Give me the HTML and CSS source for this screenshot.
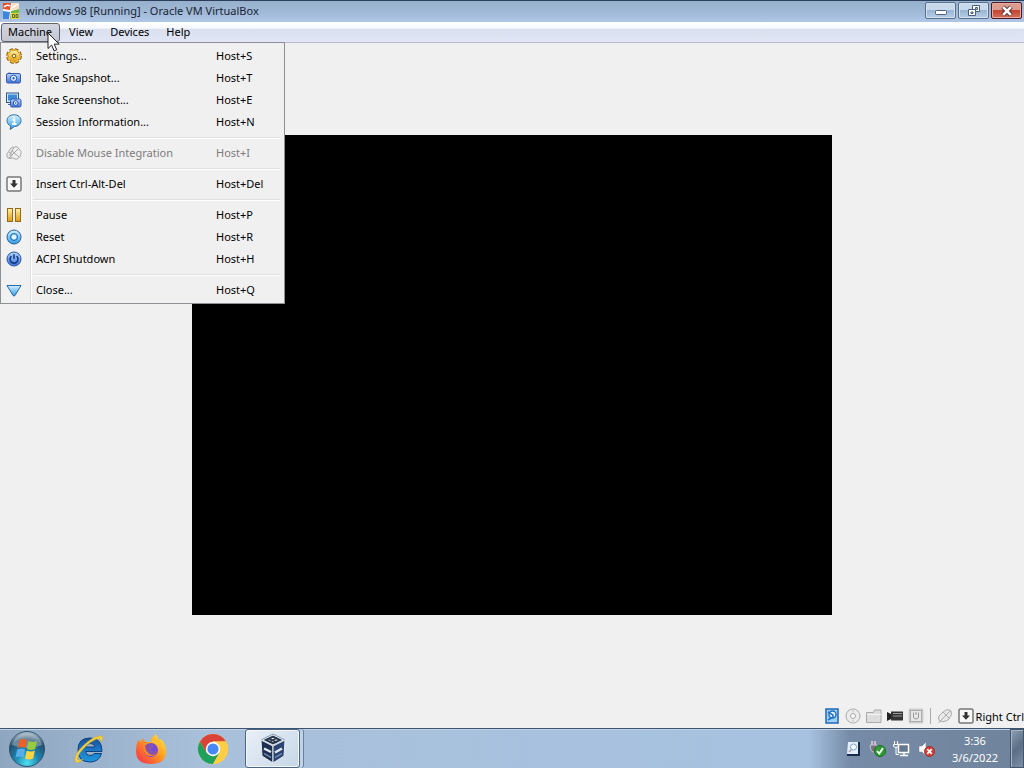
FILE: index.html
```
<!DOCTYPE html>
<html lang="en">
<head>
    <meta charset="UTF-8">
    <meta name="viewport" content="width=device-width, initial-scale=1.0">
    <title>windows 98 [Running] - Oracle VM VirtualBox</title>
    <link rel="stylesheet" href="styles.css">
</head>
<body>
    <!-- Shared gradients for the icons -->
    <svg class="defs" width="0" height="0" aria-hidden="true">
        <defs>
            <linearGradient id="gold" x1="0" y1="0" x2="0" y2="1">
                <stop offset="0" stop-color="#fff3a8"/><stop offset="1" stop-color="#e09a10"/>
            </linearGradient>
            <linearGradient id="blue" x1="0" y1="0" x2="0" y2="1">
                <stop offset="0" stop-color="#b5d8ff"/><stop offset="1" stop-color="#3d72dc"/>
            </linearGradient>
            <linearGradient id="sky" x1="0" y1="0" x2="0" y2="1">
                <stop offset="0" stop-color="#d4f1ff"/><stop offset="1" stop-color="#2f9be4"/>
            </linearGradient>
            <radialGradient id="orb" cx="0.5" cy="0.9" r="0.9">
                <stop offset="0" stop-color="#4fe0f0"/><stop offset="0.4" stop-color="#1c82ae"/>
                <stop offset="0.75" stop-color="#26506f"/><stop offset="1" stop-color="#b9cad6"/>
            </radialGradient>
            <linearGradient id="fire" x1="1" y1="0" x2="0" y2="1">
                <stop offset="0" stop-color="#fff04a"/><stop offset="0.45" stop-color="#ff9a1e"/><stop offset="1" stop-color="#f2264f"/>
            </linearGradient>
            <linearGradient id="ie" x1="0" y1="0" x2="0" y2="1">
                <stop offset="0" stop-color="#184f9a"/><stop offset="0.5" stop-color="#1d78c6"/><stop offset="1" stop-color="#1c9ade"/>
            </linearGradient>
        </defs>
    </svg>

    <header class="titlebar">
        <svg class="app-icon" width="18" height="18" viewBox="0 0 18 18">
            <rect x="1" y="1" width="16" height="16" fill="#fff"/>
            <path d="M1 1h8L8 8 1 7z" fill="#e8502c"/>
            <path d="M10 1h7v6l-7 1z" fill="#f9dcc0"/>
            <path d="M1 9l7 1-1 7H1z" fill="#3f86e0"/>
            <path d="M9 9l8-2v10H8z" fill="#77b83a"/>
            <path d="M2 5q3-3 6-1M10 6l6-4" fill="none" stroke="#fff" stroke-width="1.5"/>
            <path d="M9 17v-6h8v6z" fill="#e4d443"/>
            <path d="M10.500 12.500h2v3h-2zM14 12.500h2v3h-2z" fill="none" stroke="#556b28"/>
        </svg>
        <h1>windows 98 [Running] - Oracle VM VirtualBox</h1>
        <div class="window-buttons">
            <button type="button" aria-label="Minimize">
                <svg width="14" height="12" viewBox="0 0 14 12"><rect x="1.5" y="5.5" width="11" height="4" rx="1" fill="#fff" stroke="#4c5f78"/></svg>
            </button>
            <button type="button" aria-label="Restore">
                <svg width="14" height="12" viewBox="0 0 14 12"><path d="M5.5 .5h7v6h-7z" fill="#fff" stroke="#4c5f78"/><path d="M1.5 4.5h7v6h-7z" fill="#fff" stroke="#4c5f78"/><path d="M4 7h2v1.500H4zM8.500 2.500h2v2h-2z" fill="#a9c1dc" stroke="#4c5f78"/></svg>
            </button>
            <button type="button" class="close" aria-label="Close">
                <svg width="14" height="12" viewBox="0 0 14 12"><path d="M3 2l8 8M11 2l-8 8" stroke="#5d2c32" stroke-width="4.5"/><path d="M3.2 2.200l7.600 7.600M10.800 2.200l-7.600 7.600" stroke="#fff" stroke-width="2.6"/></svg>
            </button>
        </div>
    </header>

    <nav class="menubar">
        <button type="button" class="open" aria-expanded="true">Machine</button>
        <button type="button">View</button>
        <button type="button">Devices</button>
        <button type="button">Help</button>

        <div class="menu">
            <button type="button">
                <svg width="16" height="16" viewBox="0 0 16 16"><circle cx="8" cy="8" r="6.5" fill="none" stroke="#8a5c0c" stroke-width="2.8" stroke-dasharray="3.5 1.6"/><circle cx="8" cy="8" r="6" fill="url(#gold)" stroke="#a87412"/><circle cx="8" cy="8" r="6.1" fill="none" stroke="#f3bd3a" stroke-width="1.6" stroke-dasharray="3.2 1.6"/><circle cx="8" cy="8" r="1.8" fill="#fff4c4" stroke="#865a0c"/></svg>
                <span>Settings...</span><kbd>Host+S</kbd>
            </button>
            <button type="button">
                <svg width="16" height="16" viewBox="0 0 16 16"><path d="M2 2.500h3v2H2z" fill="#6d93dd"/><rect x=".5" y="3.5" width="14" height="9.5" rx="1.5" fill="url(#blue)" stroke="#3656ad"/><circle cx="7.5" cy="8.3" r="3.2" fill="#e5f2ff" stroke="#294ca5"/><circle cx="7.5" cy="8.3" r="1.2" fill="#3b66c4"/></svg>
                <span>Take Snapshot...</span><kbd>Host+T</kbd>
            </button>
            <button type="button">
                <svg width="16" height="16" viewBox="0 0 16 16"><rect x=".5" y="1" width="12" height="9.5" fill="#dceaf8" stroke="#2b568e"/><path d="M2 2.500h9v6H2z" fill="#3c8cda"/><path d="M2 12.500h5" stroke="#3b6ba7"/><rect x="4.5" y="7" width="10.5" height="8" rx="1.5" fill="url(#blue)" stroke="#3656ad"/><circle cx="9.7" cy="11" r="2.4" fill="#e5f2ff" stroke="#294ca5"/><circle cx="9.7" cy="11" r=".8" fill="#294ca5"/></svg>
                <span>Take Screenshot...</span><kbd>Host+E</kbd>
            </button>
            <button type="button">
                <svg width="16" height="16" viewBox="0 0 16 16"><path d="M8 .8c4.200 0 7 2.500 7 5.800s-2.800 5.900-6.500 5.900L4 15.500l.8-3.500C2.300 11 1 9.200 1 6.600 1 3.300 3.800.8 8 .8z" fill="url(#sky)" stroke="#32719f"/><circle cx="8" cy="3.5" r="1.1" fill="#fff"/><path d="M6.500 5.800h2V10M6 10.200h4.600" fill="none" stroke="#fff" stroke-width="1.7"/></svg>
                <span>Session Information...</span><kbd>Host+N</kbd>
            </button>
            <hr>
            <button type="button" disabled>
                <svg width="16" height="16" viewBox="0 0 16 16"><path d="M1 9l4-6q2-2 4 0l-1 8q-3 4-6 2-2-2-1-4z" fill="#e8e8e8" stroke="#aaa"/><path d="M7 4q3-5 6 0 3 2 2 5-2 6-6 5-5-1-5-4z" fill="#efefef" stroke="#aaa"/><path d="M3 13L13 3M6 6l7 6M3 7l4 3" fill="none" stroke="#a6a6a6"/></svg>
                <span>Disable Mouse Integration</span><kbd>Host+I</kbd>
            </button>
            <hr>
            <button type="button">
                <svg width="16" height="16" viewBox="0 0 16 16"><rect x="1" y="1" width="14" height="14" rx="1.5" fill="#f8f8f8" stroke="#777" stroke-width="1.5"/><path d="M6.500 4h3v3.500H12L8 11.800 4 7.500h2.500z" fill="#333"/></svg>
                <span>Insert Ctrl-Alt-Del</span><kbd>Host+Del</kbd>
            </button>
            <hr>
            <button type="button">
                <svg width="16" height="16" viewBox="0 0 16 16"><rect x="1.5" y="1.5" width="5" height="13" fill="url(#gold)" stroke="#9b681a"/><rect x="9.5" y="1.5" width="5" height="13" fill="url(#gold)" stroke="#9b681a"/></svg>
                <span>Pause</span><kbd>Host+P</kbd>
            </button>
            <button type="button">
                <svg width="16" height="16" viewBox="0 0 16 16"><circle cx="8" cy="8" r="7" fill="url(#sky)" stroke="#245d9e"/><circle cx="8" cy="8" r="3.5" fill="#83c6f5" stroke="#1d6cb4"/><circle cx="8" cy="8" r="2.3" fill="#e7f6ff"/></svg>
                <span>Reset</span><kbd>Host+R</kbd>
            </button>
            <button type="button">
                <svg width="16" height="16" viewBox="0 0 16 16"><circle cx="8" cy="8" r="7" fill="url(#blue)" stroke="#24539e"/><path d="M5.500 5a4 4 0 1 0 5 0M8 3.300v4.500" fill="none" stroke="#123b83" stroke-width="1.6"/></svg>
                <span>ACPI Shutdown</span><kbd>Host+H</kbd>
            </button>
            <hr>
            <button type="button">
                <svg width="16" height="16" viewBox="0 0 16 16"><path d="M1 3.500h14L9 13.500q-1 1-2 0z" fill="url(#sky)" stroke="#2368a8"/></svg>
                <span>Close...</span><kbd>Host+Q</kbd>
            </button>
        </div>

        <svg class="cursor" width="13" height="20" viewBox="0 0 13 20"><path d="M1 1v15.500l3.600-3.400 2.500 5.800 2.600-1.100-2.500-5.700h5z" fill="#fff" stroke="#222"/></svg>
    </nav>

    <main class="guest">
        <div class="screen"></div>
    </main>

    <div class="statusbar">
        <svg width="16" height="16" viewBox="0 0 16 16"><rect x="2" y="1" width="12" height="14" fill="#9fd0fa" stroke="#2167b4" stroke-width="1.5"/><circle cx="8.5" cy="6.5" r="3.5" fill="#eef8ff" stroke="#2472bf" stroke-width="1.5"/><path d="M4 4l5 3v2l-5 3" fill="none" stroke="#2472bf" stroke-width="1.5"/></svg>
        <svg width="16" height="16" viewBox="0 0 16 16"><circle cx="8" cy="8" r="7" fill="#ececec" stroke="#aaa"/><circle cx="8" cy="8" r="2.5" fill="#fafafa" stroke="#aaa"/><path d="M8 2.500v2M8 11.500v2" stroke="#bbb"/></svg>
        <svg width="16" height="16" viewBox="0 0 16 16"><path d="M.5 14.500v-10h7l1-2.500h6.500v12.500z" fill="#ddd" stroke="#aaa"/><path d="M1 6.500h14" stroke="#f5f5f5"/></svg>
        <svg width="16" height="16" viewBox="0 0 16 16"><path d="M0 4l4 2v5l-4 2z" fill="#222"/><rect x="4" y="3.5" width="12" height="9" fill="#333"/><path d="M6 5.500h9M6 8h9" stroke="#999"/></svg>
        <svg width="16" height="16" viewBox="0 0 16 16"><rect x="1.5" y="1.5" width="13" height="13" fill="none" stroke="#aaa" stroke-width="2" stroke-dasharray="1 1"/><rect x="2.5" y="2.5" width="11" height="11" fill="#e8e8e8" stroke="#aaa"/><path d="M5.500 4.500V9q0 2 2.500 2t2.500-2V4.500M8 4v3" fill="none" stroke="#999"/></svg>
        <span class="divider"></span>
        <svg width="16" height="16" viewBox="0 0 16 16"><path d="M2 8l4-4q5-4 8-1 2 3-2 8l-3 2q-4 2-7-1-1-2 0-4z" fill="#e9e9e9" stroke="#aaa"/><path d="M1.500 15L14 2M6 4l6 6" fill="none" stroke="#aaa"/></svg>
        <span class="host-key">
            <svg width="16" height="16" viewBox="0 0 16 16"><rect x="1" y="1" width="14" height="14" rx="1.5" fill="#f8f8f8" stroke="#777" stroke-width="1.5"/><path d="M6.500 4h3v3.500H12L8 11.800 4 7.500h2.500z" fill="#333"/></svg>
            Right Ctrl
        </span>
    </div>

    <footer class="taskbar">
        <button type="button" class="start" aria-label="Start">
            <svg width="38" height="38" viewBox="0 0 38 38"><circle cx="19" cy="19" r="17.5" fill="url(#orb)" stroke="#2f506c"/><path d="M4 15a15.500 15.500 0 0 1 30 0q-15 6-30 0z" fill="#fff" opacity=".3"/><path d="M11.500 10q4-2 7.500 0l-1.500 8q-4-2-8 0z" fill="#e9602a"/><path d="M20.500 11q4 2 8.500 0l-1.800 8q-4 2-8.200 0z" fill="#9acb3f"/><path d="M9.200 19.500q4-2 8 0l-1.700 8q-4-2-8 0z" fill="#58aeea"/><path d="M18.700 20.500q4 2 8.200 0l-1.700 8q-4 2-8.200 0z" fill="#fbd440"/></svg>
        </button>
        <button type="button" class="task" aria-label="Internet Explorer">
            <svg width="32" height="32" viewBox="0 0 32 32"><path d="M29 18.500H12.500q.5 4 4.500 4 3 0 4-2h7.500Q26 29 17 29 5 29 5 17T17 5q12 0 12 13.500zM12.500 14H22q-.5-3.500-4.700-3.500T12.500 14z" fill="url(#ie)" stroke="#123f7c"/><path d="M3 29Q-1 24 10 13T29 3q2 2-1 6 0-4-3-3.500Q17 8 10 16T5 27q2 1 5-1-4 5-7 3z" fill="#f6d43e" stroke="#d9a920" stroke-width=".6"/></svg>
        </button>
        <button type="button" class="task" aria-label="Firefox">
            <svg width="32" height="32" viewBox="0 0 32 32"><path d="M3 7l3 2 1-4 4 4h5q0-5 5-8 1 4 4 6l1-1q5 5 5 12 0 13-15 13T1 18Q1 12 3 7z" fill="url(#fire)"/><circle cx="16" cy="17" r="7" fill="#7449d6"/><path d="M9 14q4-4 9-1l-3 3q0 3 4 3 3 0 4-2-1 6-7 6-8 0-7-9z" fill="#ff8a1e"/><path d="M10 13q3-3 8 0l-3 3q0 3 4 3 3 0 4-3 0 6-6 6-6-1-7-9z" fill="#6a45c8" opacity=".8"/><path d="M16 9q8 1 8 8 1-8-5-10z" fill="#ffc42a"/></svg>
        </button>
        <button type="button" class="task" aria-label="Chrome">
            <svg width="32" height="32" viewBox="0 0 32 32"><circle cx="16" cy="16" r="15" fill="#fdce43"/><path d="M3 8.500A15 15 0 0 1 29 8.500H16L9.500 19.700z" fill="#da4337"/><path d="M3 8.500L9.500 19.700 16 23.500 22.500 19.700 16 31A15 15 0 0 1 3 8.500z" fill="#1fa05b"/><path d="M29 8.500H16v5l6.500 6.200L16 31A15 15 0 0 0 29 8.500z" fill="#fdce43"/><circle cx="16" cy="16" r="7.2" fill="#fff"/><circle cx="16" cy="16" r="5.6" fill="#4587f3"/></svg>
        </button>
        <button type="button" class="task active" aria-label="Oracle VM VirtualBox">
            <svg width="32" height="32" viewBox="0 0 32 32"><path d="M16 1l12 6-12 6L4 7z" fill="#f5f8fb" stroke="#8296ae"/><path d="M4 7l12 6v17L5 23z" fill="#1c2f50" stroke="#e4ebf2"/><path d="M28 7l-12 6v17l11-7z" fill="#2b4370" stroke="#e4ebf2"/><path d="M9 7l7-3.500L23 7l-7 3.500z" fill="none" stroke="#26364c" stroke-width="2"/><path d="M12 5.500l8 4M20 5l-8 4" stroke="#26364c" stroke-width="1.500"/><path d="M7 15.500l7 3.500M18 19.500l7-4" stroke="#dfe8f2" stroke-width="2.500"/><path d="M7 20.500l7 4M18 24.500l7-4" stroke="#6f84a8" stroke-width="1.5"/></svg>
        </button>

        <div class="tray">
            <svg width="16" height="16" viewBox="0 0 16 16"><path d="M4 1h11v14H2v-2h2z" fill="#18294a"/><path d="M3 1h10v12H2z" fill="#dfeefc"/><circle cx="8.5" cy="6" r="3" fill="#fff" stroke="#7ba8d4"/><path d="M6.500 8.500L4 11" stroke="#b58f9c" stroke-width="1.5"/></svg>
            <svg width="18" height="16" viewBox="0 0 18 16"><path d="M4 0v4M7 0v4" stroke="#e8cfdc" stroke-width="1.5"/><path d="M2 4h7v5q-4 4-6 0z" fill="#77707e" stroke="#c7bfcc"/><circle cx="12" cy="10" r="5.5" fill="#2f9e32" stroke="#176b1c"/><path d="M9 10l2.300 2.500L15 7" fill="none" stroke="#fff" stroke-width="1.8"/></svg>
            <svg width="18" height="16" viewBox="0 0 18 16"><rect x="5.5" y="3.5" width="10" height="8" fill="#65788f" stroke="#fff" stroke-width="1.5"/><path d="M11 12v2M7 14.500h8" stroke="#fff" stroke-width="1.5"/><path d="M1.500 0v3M4.500 0v3M.5 3.500h5v2q-2.500 2-5 0zM3 6v7.500h3" fill="none" stroke="#fff"/></svg>
            <svg width="18" height="16" viewBox="0 0 18 16"><path d="M1 5h3l4-4v14l-4-4H1z" fill="#fff" stroke="#68798d" stroke-width=".5"/><circle cx="11.5" cy="10.5" r="5" fill="#dc3b35" stroke="#94362f"/><path d="M9.200 8.200l4.600 4.600M13.800 8.200l-4.600 4.600" stroke="#fff" stroke-width="1.7"/></svg>
        </div>
        <div class="clock">
            <time>3:36</time>
            <time>3/6/2022</time>
        </div>
        <button type="button" class="show-desktop" aria-label="Show desktop"></button>
    </footer>
</body>
</html>
```
FILE: styles.css
```
/* Page */
* {
    box-sizing: border-box;
}

body {
    display: flex;
    flex-direction: column;
    height: 100vh;
    margin: 0;
    overflow: hidden;
    background-color: #f0f0f0;
    color: #000;
    font-family: "Noto Sans", "Open Sans", sans-serif;
    font-size: 11px;
}

button {
    padding: 0;
    border: none;
    background: none;
    color: inherit;
    font: inherit;
}

svg {
    display: block;
    flex: none;
}

.defs {
    position: absolute;
}

/* Title bar */
.titlebar {
    display: flex;
    align-items: center;
    height: 22px;
    padding: 0 2px 2px;
    border-top: 1px solid #2b3f5c;
    background: linear-gradient(#97b1cd, #9fb9d6 50%, #b0c6e8);
}

h1 {
    flex: 1;
    margin: 0 0 0 6px;
    font-size: 11px;
    font-weight: normal;
    color: #1b2434;
}

.window-buttons {
    display: flex;
    align-self: flex-start;
    gap: 2px;
    padding-top: 1px;
}

.window-buttons button {
    display: flex;
    align-items: center;
    justify-content: center;
    width: 31px;
    height: 17px;
    border: 1px solid #58708f;
    border-radius: 2px;
    background: linear-gradient(#c8d9eb 45%, #9ab5d3 50%, #b7cfe6);
    box-shadow: inset 0 0 0 1px #d4e2f0;
}

.window-buttons .close {
    border-color: #4c1a24;
    background: linear-gradient(#dd9b8e 45%, #c24532 50%, #d4715a);
    box-shadow: inset 0 0 0 1px #e5aba0;
}

/* Menu bar */
.menubar {
    position: relative;
    display: flex;
    align-items: center;
    gap: 1px;
    height: 21px;
    padding-left: 1px;
    border-bottom: 1px solid #b9bcd2;
    background: linear-gradient(#fff, #f6f9fe 30%, #dae0ee 38%, #e2e6f7);
}

.menubar > button {
    height: 19px;
    padding: 0 8px 2px;
    border-radius: 3px;
}

.menubar > .open {
    padding: 0 7px 2px 6px;
    border: 1px solid #5e636e;
    background: linear-gradient(#d3d6df, #c3c7d3);
}

/* Machine menu */
.menu {
    position: absolute;
    top: 20px;
    left: 0;
    width: 285px;
    padding: 2px 2px 2px 0;
    border: 1px solid #8f9094;
    background: linear-gradient(90deg, #f1f1f1 29px, #dfdfdf 29px, #dfdfdf 30px, #fff 30px, #fff 31px, #f0f0f0 31px);
}

.menu button {
    display: grid;
    grid-template-columns: 30px 180px 1fr;
    align-items: center;
    width: 100%;
    height: 22px;
    padding-left: 5px;
    text-align: left;
}

.menu button:disabled {
    color: #7d7d7d;
}

.menu span,
.menu kbd {
    padding-bottom: 2px;
    font: inherit;
}

.menu hr {
    height: 2px;
    margin: 4px 2px 3px 32px;
    border: none;
    border-top: 1px solid #e0e0e0;
    border-bottom: 1px solid #fff;
}

.cursor {
    position: absolute;
    top: 10px;
    left: 47px;
}

/* Guest display */
.guest {
    display: flex;
    flex: 1;
    align-items: center;
    justify-content: center;
    min-height: 0;
}

.screen {
    width: 62.5%;
    aspect-ratio: 4 / 3;
    background-color: #000;
}

/* Status bar */
.statusbar {
    display: flex;
    align-items: center;
    justify-content: flex-end;
    gap: 5px;
    height: 22px;
    padding-bottom: 2px;
}

.divider {
    width: 1px;
    height: 16px;
    margin: 0 1px;
    background-color: #aaa;
}

.host-key {
    display: flex;
    align-items: center;
    gap: 2px;
}

/* Taskbar */
.taskbar {
    display: flex;
    align-items: center;
    height: 40px;
    border-top: 1px solid #3c5372;
    background: linear-gradient(90deg, #8fa6c1, #a9c0db 20%, #a6c2e0 79%, #768ba7 83%, #70839c);
    box-shadow: inset 0 1px #c3d2e3;
}

.start {
    width: 58px;
    padding-left: 8px;
}

.task {
    display: flex;
    align-items: center;
    justify-content: center;
    width: 62px;
    height: 100%;
}

.task.active {
    width: 55px;
    margin-left: 1px;
    border: 1px solid #4c6584;
    border-radius: 3px;
    background: linear-gradient(135deg, #e9f0f7, #c6d7e8);
    box-shadow: inset 0 0 0 1px #f4f8fc, 3px 0 0 #c1d3e6, 4px 0 0 #6a82a0;
}

.tray {
    display: flex;
    gap: 7px;
    margin-left: auto;
}

.clock {
    display: flex;
    flex-direction: column;
    width: 74px;
    padding-left: 4px;
    color: #fff;
    line-height: 17px;
    text-align: center;
}

.show-desktop {
    width: 14px;
    height: 100%;
    border: 1px solid #43546b;
    background: linear-gradient(135deg, #8fa0b5, #5c6e86 50%, #7d8fa6);
    box-shadow: inset 1px 1px #a6b4c6;
}
```
